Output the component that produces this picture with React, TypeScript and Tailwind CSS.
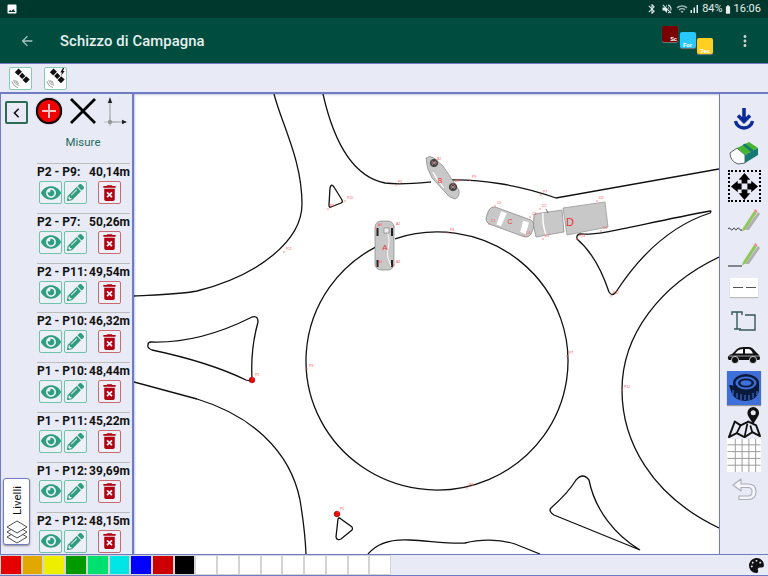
import React from 'react';
import { FaEye, FaPencilAlt, FaPalette } from 'react-icons/fa';
import { MdArrowBack, MdBluetooth, MdVolumeOff, MdWifi, MdSignalCellularAlt, MdBatteryFull, MdImage, MdMoreVert, MdDeleteForever, MdChevronLeft } from 'react-icons/md';

const measures = [
  ['P2 - P9:', '40,14m'],
  ['P2 - P7:', '50,26m'],
  ['P2 - P11:', '49,54m'],
  ['P2 - P10:', '46,32m'],
  ['P1 - P10:', '48,44m'],
  ['P1 - P11:', '45,22m'],
  ['P1 - P12:', '39,69m'],
  ['P2 - P12:', '48,15m'],
];

const swatches = [
  'bg-[#e60000]', 'bg-[#e0a800]', 'bg-[#eeee00]', 'bg-[#009a00]', 'bg-[#00e070]', 'bg-[#00e5e5]',
  'bg-[#0000ff]', 'bg-[#cc0000]', 'bg-[#000000]', 'bg-white', 'bg-white', 'bg-white',
  'bg-white', 'bg-white', 'bg-white', 'bg-white', 'bg-white', 'bg-white',
];

const markers: [number, number, string][] = [
  [396, 185, 'P5'], [470, 180, 'P9'], [541, 195, 'P7'], [345, 201, 'P10'], [328, 209, 'P8'],
  [284, 252, 'P11'], [448, 233, 'P4'], [577, 239, 'P13'], [611, 296, 'P11'], [307, 369, 'P3'],
  [253, 378, 'P2'], [338, 512, 'P1'], [467, 488, 'P6'], [567, 356, 'P7'], [622, 390, 'P12'],
  [376, 228, 'A4'], [394, 227, 'A2'], [376, 265, 'A1'], [394, 265, 'A3'],
  [435, 162, 'B2'], [453, 184, 'B3'], [495, 206, 'C2'], [489, 224, 'C1'], [524, 236, 'C4'], [530, 217, 'C3'],
  [540, 209, 'D2'], [543, 239, 'D1'], [597, 201, 'D3'], [601, 231, 'D4'],
];

const Satellite = ({ bolt }: { bolt?: boolean }) => (
  <svg viewBox="0 0 24 24" className="w-[21px] h-[21px]">
    <g transform="rotate(-45 14 9)" fill="#111">
      <rect x="11.5" y="6.5" width="5" height="5" />
      <rect x="11" y="0" width="6" height="5.5" />
      <rect x="11" y="12.5" width="6" height="5.5" />
    </g>
    <g fill="none" stroke="#777" strokeWidth="0.8">
      <path d="M4 13.5 A8 8 0 0 0 10.5 20" />
      <path d="M6 14 A5.5 5.5 0 0 0 10 18" />
      <path d="M7.5 14.5 A3 3 0 0 0 9.5 16.5" />
      <path d="M2 15 A10 10 0 0 0 9 22.5" />
    </g>
    {bolt && <path d="M20.5 0 L17.5 5 L19.5 5 L18 9.5 L22.5 3.5 L20.5 3.5 L22 0 Z" fill="#111" />}
  </svg>
);

const Axes = () => (
  <svg viewBox="0 0 26 30" className="w-[26px] h-[30px]">
    <path d="M8 26 V4" stroke="#999" strokeWidth="1" />
    <path d="M8 26 H24" stroke="#999" strokeWidth="1" />
    <path d="M2 26 H14 M8 20 V30" stroke="#bbb" strokeWidth="1" />
    <circle cx="8" cy="26" r="2.2" fill="#999" />
    <path d="M8 1 L5.8 7 H10.2 Z" fill="#222" />
    <path d="M25 26 L20 23.8 V28.2 Z" fill="#222" />
  </svg>
);

const SaveIcon = () => (
  <svg viewBox="0 0 24 24" className="w-[24px] h-[24px]">
    <path d="M12 1 V14 M6 8.5 L12 14.5 L18 8.5" fill="none" stroke="#0d2c9a" strokeWidth="3.6" />
    <path d="M3.5 14 A8.6 8.2 0 0 0 20.5 14" fill="none" stroke="#0d2c9a" strokeWidth="3.4" />
  </svg>
);

const EraserIcon = () => (
  <svg viewBox="0 0 30 24" className="w-[30px] h-[24px]">
    <path d="M1 12 L8 7 L16 14 L16 22 L9 23 Q1 20 1 12 Z" fill="#fff" stroke="#222" strokeWidth="0.7" />
    <path d="M8 7 L20 1 L29 7 L16 14 Z" fill="#46b52f" />
    <path d="M16 14 L29 7 L29 14 L16 22 Z" fill="#157a74" />
    <path d="M16 2.5 L25 9.5 L22 11 L13.5 4 Z" fill="#157a74" />
  </svg>
);

const MoveIcon = () => (
  <div className="w-[33px] h-[32px] border-2 border-dotted border-black flex items-center justify-center">
    <svg viewBox="0 0 30 30" className="w-[29px] h-[29px]">
      <path d="M15 1 L21 8 H18 V12 H12 V8 H9 Z M15 29 L21 22 H18 V18 H12 V22 H9 Z M1 15 L8 9 V12 H12 V18 H8 V21 Z M29 15 L22 9 V12 H18 V18 H22 V21 Z" fill="#000" />
      <rect x="12.5" y="12.5" width="5" height="5" fill="#e8eaf6" />
    </svg>
  </div>
);

const PencilIcon = ({ wave }: { wave?: boolean }) => (
  <svg viewBox="0 0 34 30" className="w-[34px] h-[30px]">
    <path d="M18 25 L31 7 L33 9 L22 25 Z" fill="#b0b0b0" />
    <path d="M16 23 L27 6 L29.5 8 L18.5 24.5 L15 26.5 Z" fill="#8fc75a" />
    <path d="M27 6 L28 4 L30.5 6 L29.5 8 Z" fill="#e88" />
    {wave ? (
      <path d="M1 24 C3 21 4 27 6 24 C8 21 8 27 10 24 C12 21 12 26 15 25" fill="none" stroke="#222" strokeWidth="1" />
    ) : (
      <path d="M1 27 H15" stroke="#222" strokeWidth="1" />
    )}
  </svg>
);

const DashIcon = () => (
  <div className="w-[28px] h-[19px] bg-white flex items-center justify-center gap-[3px] shadow-[0_1px_1px_#bbb]">
    <div className="w-[10px] h-[1px] bg-[#555]" />
    <div className="w-[10px] h-[1px] bg-[#555]" />
  </div>
);

const TextToolIcon = () => (
  <svg viewBox="0 0 26 22" className="w-[26px] h-[22px]">
    <path d="M1 5 V2 H11 V5 M6 2 V19 M3 19 H10" fill="none" stroke="#37575a" strokeWidth="1.4" />
    <path d="M14 5 H24 V20 H8" fill="none" stroke="#37575a" strokeWidth="1.4" />
  </svg>
);

const CarIcon = () => (
  <svg viewBox="0 0 34 18" className="w-[34px] h-[18px]">
    <path d="M1 13 Q0 9 5 8 L10 3 Q12 1 17 1 H22 Q25 1 28 5 L31 8 Q33 9 33 13 L32 14 H2 Z" fill="#111" />
    <path d="M8 7.5 L11 4.5 Q13 3 16 3 V7.5 Z M18 3 H21.5 Q24 3 26 7.5 H18 Z" fill="#fff" />
    <path d="M1.5 10 H33" stroke="#fff" strokeWidth="0.6" />
    <circle cx="8" cy="14" r="3.6" fill="#111" stroke="#e8eaf6" strokeWidth="0.8" />
    <circle cx="26" cy="14" r="3.6" fill="#111" stroke="#e8eaf6" strokeWidth="0.8" />
  </svg>
);

const TapeIcon = () => (
  <div className="w-[34px] h-[34px] bg-[#3f6fd8] flex items-center justify-center shadow-[0_1px_1px_#999]">
    <svg viewBox="0 0 32 30" className="w-[32px] h-[30px]">
      <path d="M1 12 L4 21 Q8 28 18 28 Q29 27 31 18 V10 L18 14 Z" fill="#0b1a3a" />
      <ellipse cx="18" cy="10" rx="13" ry="9" fill="#0b1a3a" />
      <ellipse cx="18" cy="10" rx="10.5" ry="6.5" fill="#3f6fd8" />
      <ellipse cx="18" cy="10" rx="8" ry="4.6" fill="#0b1a3a" />
      <ellipse cx="18" cy="10" rx="5.6" ry="2.8" fill="#3f6fd8" />
      <path d="M5 17 V22 M9 20 V25 M13 21 V27 M17 22 V27 M21 22 V27 M25 20 V25 M29 18 V22" stroke="#3f6fd8" strokeWidth="1.1" />
    </svg>
  </div>
);

const MapIcon = () => (
  <svg viewBox="0 0 36 34" className="w-[35px] h-[33px]">
    <path d="M8 16 L14 20 L22 16 L30 20 L34 31 L26 27 L18 32 L10 28 L2 32 Z" fill="none" stroke="#111" strokeWidth="2" strokeLinejoin="round" />
    <path d="M14 20 L10 28 M21 18 L18 32 M24 20 L26 27" stroke="#111" strokeWidth="1.8" />
    <path d="M27 19 C23 12 21 10 21 7 A6 6 0 0 1 33 7 C33 10 31 12 27 19 Z" fill="#111" />
    <circle cx="27" cy="7" r="2.6" fill="#e8eaf6" />
  </svg>
);

const GridIcon = () => (
  <svg viewBox="0 0 34 34" className="w-[34px] h-[33px] bg-white">
    <path d="M8 0 V34 M15 0 V34 M22 0 V34 M29 0 V34 M0 6 H34 M0 13 H34 M0 20 H34 M0 27 H34" stroke="#999" strokeWidth="1" />
  </svg>
);

const UndoIcon = () => (
  <svg viewBox="0 0 26 24" className="w-[26px] h-[24px]">
    <path d="M10 2 L2 8 L10 14 V10.5 H17 Q21 10.5 21 14.5 Q21 19 17 19 H8 V22.5 H17 Q25 22.5 25 14.5 Q25 7 17 7 H10 Z" fill="#f5f5fa" stroke="#a9adb5" strokeWidth="1.1" strokeLinejoin="round" />
  </svg>
);

const LayersIcon = () => (
  <svg viewBox="0 0 22 24" className="w-[22px] h-[24px]">
    <g fill="#fff" stroke="#222" strokeWidth="0.8" strokeLinejoin="round">
      <path d="M11 11 L21 17 L11 23 L1 17 Z" />
      <path d="M11 6 L21 12 L11 18 L1 12 Z" />
      <path d="M11 1 L21 7 L11 13 L1 7 Z" />
    </g>
  </svg>
);

const Wheel = ({ x, y }: { x: number; y: number }) => (
  <g>
    <circle cx={x} cy={y} r="3.8" fill="#444" stroke="#222" strokeWidth="0.5" />
    <path d={`M${x - 2.4} ${y - 2.4} l4.8 4.8 m0 -4.8 l-4.8 4.8 M${x - 3} ${y} h6`} stroke="#caa" strokeWidth="0.6" />
  </g>
);

const Sketch = () => (
  <svg viewBox="134 94 585 460" className="w-full h-full">
    <g fill="none" stroke="#111" strokeWidth="1.3">
      <path d="M274 94 C282 125 302 160 302 204 C302 240 260 275 197 291 C175 295 150 295 134 296" />
      <path d="M323 94 C330 125 345 175 385 183 C400 185 420 183 431 182 M449 180 C480 179 520 185 556 198 L719 169" />
      <path d="M581 234 C600 236 640 224 710 211 Q712 211 710 213 C670 226 640 255 616 292 Q612 297 609 292 C600 265 590 250 577 239 Q576 234 581 234 Z" />
      <path d="M395 238.81 A131 129 0 1 1 376 246.84" />
      <path d="M719 257 C660 285 622 335 622 390 C622 440 650 495 719 528" />
      <path d="M330 188 Q331 183 334 187 L342 200 Q343 202 341 203 L331 207 Q329 208 329 205 Z" />
      <path d="M151 342 C185 343 220 333 250 318 Q258 314 258 322 C253 340 251 360 252 378 Q252 382 246 380 C215 365 185 357 152 350 Q147 348 148 345 Q148 342 151 342 Z" />
      <path d="M134 382 L197 399 C250 415 290 450 300 500 Q305 530 306 554" />
      <path d="M368 554 C378 542 395 539 410 540 C430 541 450 544 465 543 C480 539 500 539 515 544 L540 554" />
      <path d="M338 519 Q339 517 341 519 L352 527 Q353 529 352 530 L341 539 Q337 541 336 537 Z" />
      <path d="M576 480 Q583 472 589 480 C595 510 615 535 640 550 L554 515 Q548 511 551 508 C560 500 570 490 576 480 Z" />
    </g>
    <circle cx="252" cy="380" r="2.8" fill="#f00" stroke="#700" strokeWidth="0.7" />
    <circle cx="337" cy="514" r="2.8" fill="#f00" stroke="#700" strokeWidth="0.7" />

    {/* car A */}
    <rect x="375" y="221" width="19" height="49" rx="6" fill="#c8c8c8" stroke="#777" strokeWidth="0.6" />
    <rect x="376.5" y="228" width="2" height="8" fill="#222" />
    <rect x="391" y="228" width="2" height="8" fill="#222" />
    <rect x="376.5" y="260" width="2" height="7" fill="#222" />
    <rect x="391" y="260" width="2" height="7" fill="#222" />
    <path d="M384 228 H389 V233 H384 Z" fill="#eee" stroke="#666" strokeWidth="0.5" />
    <path d="M388 234 C391 245 386 250 388 258 L391 266" fill="none" stroke="#fff" strokeWidth="1" />
    {/* car B */}
    <path d="M426 158 Q430 155 434 158 L443 166 L459 190 Q460 197 455 199 Q449 198 445 192 L432 178 Q426 168 426 158 Z" fill="#c8c8c8" stroke="#777" strokeWidth="0.6" />
    <path d="M433 172 L438 180 L444 188 L436 178 Z" fill="#fff" stroke="#fff" strokeWidth="1" />
    <Wheel x={434} y={163} />
    <Wheel x={453} y={187} />
    {/* car C */}
    <g transform="rotate(20 510 222)">
      <rect x="486" y="213" width="48" height="18" rx="6" fill="#c8c8c8" stroke="#777" strokeWidth="0.6" />
      <path d="M498 215 H504 L503 229 H498 Z" fill="#fff" />
      <path d="M522 216 H528 L529 228 H523 Z" fill="#fff" />
    </g>
    {/* truck D */}
    <path d="M534 214 L562 210 L564 232 L536 237 Q532 225 534 214 Z" fill="#c8c8c8" stroke="#777" strokeWidth="0.6" />
    <path d="M543 213 Q542 223 546 235" fill="none" stroke="#fff" strokeWidth="1.4" />
    <path d="M563 208 L605 202 L608 227 L567 235 Z" fill="#c8c8c8" stroke="#999" strokeWidth="0.8" />
    <path d="M546 209 L548 213" stroke="#222" strokeWidth="0.6" />

    <g fontFamily="'Liberation Sans', sans-serif" fill="#f03030" textAnchor="middle">
      <text x="385" y="250" fontSize="8">A</text>
      <text x="440" y="183" fontSize="7">B</text>
      <text x="510" y="224" fontSize="7">C</text>
      <text x="570" y="226" fontSize="11">D</text>
    </g>
    <g fontFamily="'Liberation Sans', sans-serif" fill="#ff5050" fontSize="3.4">
      {markers.map(([x, y, label]) => (
        <g key={`${x}-${y}`}>
          <path d={`M${x - 1.2} ${y - 1.2} l2.4 2.4 m0 -2.4 l-2.4 2.4`} stroke="#ff7070" strokeWidth="0.4" />
          <text x={x + 2} y={y - 2}>{label}</text>
        </g>
      ))}
    </g>
  </svg>
);

const MeasureRow = ({ name, value }: { name: string; value: string }) => (
  <div className="h-[49.8px] border-t border-[#bdbdbd] shrink-0">
    <div className="flex justify-between text-[12px] font-bold leading-[17px] text-[#111] whitespace-nowrap">
      <span>{name}</span>
      <span>{value}</span>
    </div>
    <div className="flex ml-[2px]">
      <button className="w-[23px] h-[23px] bg-[#eef0f8] border border-[#6fc3a8] rounded-[2px] flex items-center justify-center">
        <FaEye className="text-[#2e9e7e] w-[20px] h-[20px]" />
      </button>
      <button className="w-[23px] h-[23px] ml-[2px] bg-[#eef0f8] border border-[#6fc3a8] rounded-[2px] flex items-center justify-center">
        <FaPencilAlt className="text-[#2e9e7e] w-[17px] h-[17px]" />
      </button>
      <button className="w-[23px] h-[23px] ml-[11px] bg-[#eef0f8] border border-[#c96a70] rounded-[2px] flex items-center justify-center">
        <MdDeleteForever className="text-[#b00012] w-[22px] h-[22px]" />
      </button>
    </div>
  </div>
);

const App = () => {
  return (
    <div className="relative w-[768px] h-[576px] overflow-hidden flex flex-col bg-[#e8eaf6] font-['Roboto',sans-serif]">
      {/* status bar */}
      <div className="h-[18px] shrink-0 bg-[#00382e] flex items-center pl-[6px] pr-[7px] text-white">
        <MdImage className="w-[12px] h-[12px]" />
        <div className="ml-auto flex items-center text-[11px] text-[#e6eeee]">
          <MdBluetooth className="w-[12px] h-[12px]" />
          <MdVolumeOff className="w-[12px] h-[12px] ml-[3px]" />
          <MdWifi className="w-[12px] h-[12px] ml-[3px] opacity-70" />
          <MdSignalCellularAlt className="w-[12px] h-[12px]" />
          <span className="ml-[2px]">84%</span>
          <MdBatteryFull className="w-[10px] h-[13px]" />
          <span className="ml-[1px]">16:06</span>
        </div>
      </div>

      {/* app bar */}
      <div className="h-[45px] shrink-0 bg-[#004d40] flex items-center text-white">
        <MdArrowBack className="w-[16px] h-[16px] ml-[19px] text-[#a8c4bf]" />
        <span className="ml-[25px] pt-[1px] text-[14.8px] font-medium text-[#e8f0ee] tracking-[0.1px]">Schizzo di Campagna</span>
        <div className="ml-auto flex items-start self-start mt-[8px] gap-[1.5px] mr-[23px]">
          <div className="w-[16px] h-[16px] bg-[#7a0000] rounded-[2px] shadow-[0_1px_1px_#777] flex items-end justify-end text-[6px] font-bold text-white leading-[7px] pr-[1px]">Sc</div>
          <div className="w-[16px] h-[16px] mt-[6px] bg-[#29c8ff] rounded-[2px] shadow-[0_1px_1px_#777] flex items-end justify-center text-[6px] font-bold text-white leading-[7px]">For</div>
          <div className="w-[16px] h-[16px] mt-[12px] bg-[#ffd020] rounded-[2px] shadow-[0_1px_1px_#777] flex items-end justify-center text-[6px] font-bold text-white leading-[7px]">Tec</div>
        </div>
        <MdMoreVert className="w-[18px] h-[18px] mr-[14px] text-[#c4d4d0]" />
      </div>

      {/* satellite toolbar */}
      <div className="h-[31px] shrink-0 border-t border-b-2 border-[#6f7cc4] flex items-center pl-[9px] gap-[12px]">
        <button className="w-[23px] h-[23px] bg-white border border-[#86c9b4] rounded-[2px] flex items-center justify-center">
          <Satellite />
        </button>
        <button className="w-[23px] h-[23px] bg-white border border-[#86c9b4] rounded-[2px] flex items-center justify-center">
          <Satellite bolt />
        </button>
      </div>

      {/* main row */}
      <div className="flex-1 min-h-0 flex">
        <div className="w-[134px] shrink-0 border-l border-r-2 border-[#6f7cc4] overflow-hidden">
          <div className="flex items-center h-[34px] pl-[4px]">
            <button className="w-[23px] h-[23px] mt-[3px] border-2 border-[#2e6b55] rounded-[2px] flex items-center justify-center">
              <MdChevronLeft className="w-[20px] h-[20px] text-[#111]" />
            </button>
            <div className="w-[26px] h-[26px] ml-[8px] rounded-full bg-[#f00000] border-2 border-[#1a0000] shadow-[0_0_1px_#000] flex items-center justify-center">
              <div className="relative w-[14px] h-[14px]">
                <div className="absolute left-[6px] top-0 w-[2px] h-[14px] bg-[#ffc0c0]" />
                <div className="absolute left-0 top-[6px] w-[14px] h-[2px] bg-[#ffc0c0]" />
              </div>
            </div>
            <svg viewBox="0 0 26 26" className="w-[26px] h-[26px] ml-[8px]">
              <path d="M1 1 L25 25 M25 1 L1 25" stroke="#000" strokeWidth="2.8" />
            </svg>
            <div className="ml-[6px]"><Axes /></div>
          </div>
          <div className="h-[35px] pl-[36px] pr-[3px] flex justify-center pt-[7px]">
            <span className="text-[11.5px] leading-[14px] text-[#1f6b5c]">Misure</span>
          </div>
          <div className="ml-[36px] mr-[2px] flex flex-col">
            {measures.map(([name, value]) => (
              <MeasureRow key={name} name={name} value={value} />
            ))}
          </div>
        </div>

        <div className="flex-1 min-w-0 bg-white shadow-[inset_1px_1px_2px_#c4c8dc] overflow-hidden">
          <Sketch />
        </div>

        <div className="w-[49px] shrink-0 border-l border-[#6f7cc4] flex flex-col items-center pt-[8px]">
          {[
            <SaveIcon />, <EraserIcon />, <MoveIcon />, <PencilIcon wave />, <PencilIcon />, <DashIcon />,
            <TextToolIcon />, <CarIcon />, <TapeIcon />, <MapIcon />, <GridIcon />, <UndoIcon />,
          ].map((icon, i) => (
            <div key={i} className="h-[33.7px] w-full shrink-0 flex items-center justify-center">{icon}</div>
          ))}
        </div>
      </div>

      {/* colour strip */}
      <div className="h-[22px] shrink-0 border-t border-b border-[#6f7cc4] flex items-stretch">
        <div className="flex w-[391px] shrink-0 bg-[#c8c8c8]">
          {swatches.map((c, i) => (
            <div key={i} className={`flex-1 border-[1.5px] border-[#d4d4d4] ${c}`} />
          ))}
        </div>
        <div className="flex-1 flex items-center justify-end pr-[4px]">
          <FaPalette className="w-[15px] h-[15px] text-[#111]" />
        </div>
      </div>

      {/* layers tab */}
      <div className="absolute left-[3px] top-[478px] w-[27px] h-[67px] bg-white border border-[#6f7cc4] rounded-[3px] shadow-[0_1px_2px_#888] flex flex-col items-center pt-[4px]">
        <span className="[writing-mode:vertical-rl] rotate-180 text-[11.5px] leading-[14px] text-[#111] h-[36px] text-center">Livelli</span>
        <div className="mt-[1px]"><LayersIcon /></div>
      </div>
    </div>
  );
};

export default App;
